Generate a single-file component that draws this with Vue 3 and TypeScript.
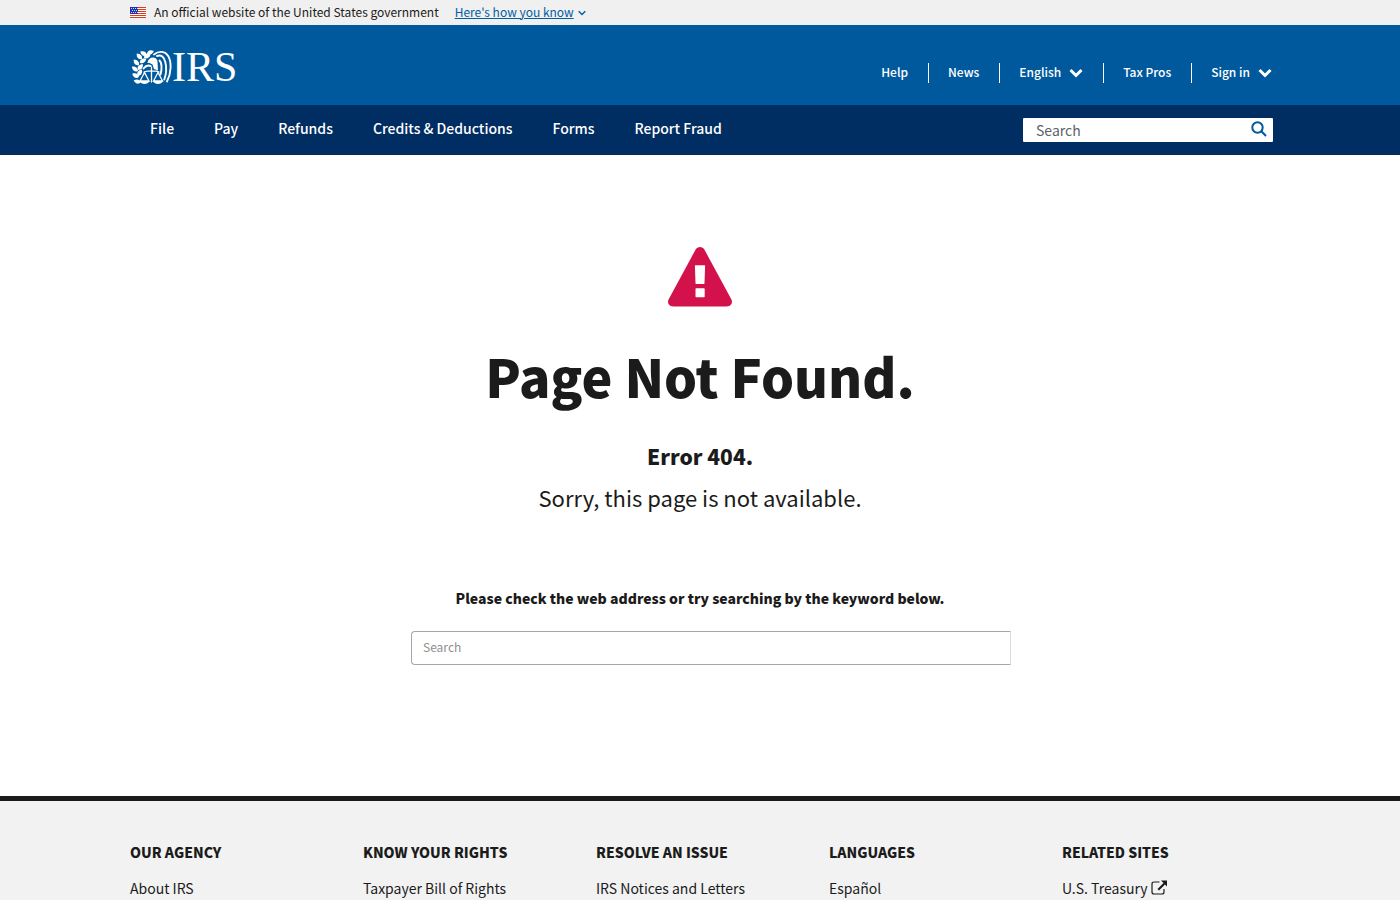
<script setup lang="ts">
interface FooterColumn {
  title: string
  link: string
  external?: boolean
}

interface UtilityItem {
  label: string
  menu?: boolean
}

const utilityItems: UtilityItem[] = [
  { label: 'Help' },
  { label: 'News' },
  { label: 'English', menu: true },
  { label: 'Tax Pros' },
  { label: 'Sign in', menu: true },
]

const mainLinks: string[] = ['File', 'Pay', 'Refunds', 'Credits & Deductions', 'Forms', 'Report Fraud']

const footerColumns: FooterColumn[] = [
  { title: 'Our Agency', link: 'About IRS' },
  { title: 'Know Your Rights', link: 'Taxpayer Bill of Rights' },
  { title: 'Resolve an Issue', link: 'IRS Notices and Letters' },
  { title: 'Languages', link: 'Español' },
  { title: 'Related Sites', link: 'U.S. Treasury', external: true },
]

// Laurel leaves: base point on the branch and the direction of the tip.
const leaves: [number, number, number][] = [
  [9, 32, -165],
  [7, 27, -150],
  [6, 21, -140],
  [7, 15, -130],
  [10, 9, -130],
  [15, 5, -150],
  [6, 26, -55],
  [6, 20, -45],
  [8, 13, -30],
  [12, 8, -25],
  [15, 4, -20],
]
</script>

<template>
  <div class="page">
    <section class="banner" aria-label="Official government website">
      <div class="container banner-inner">
        <svg class="flag" viewBox="0 0 16 11" aria-hidden="true">
          <rect width="16" height="11" fill="#fff" />
          <path d="M0 .5h16M0 2.5h16M0 4.5h16M0 6.5h16M0 8.5h16M0 10.5h16" stroke="#db3e1f" />
          <rect width="8" height="7" fill="#1e33b1" />
          <path d="M1 1.5h7M2 3.5h6M1 5.500h7" stroke="#fff" stroke-dasharray="1 1" opacity=".8" />
        </svg>
        <span>An official website of the United States government</span>
        <button type="button" class="banner-button">
          <span class="banner-link">Here's how you know</span>
          <svg viewBox="0 0 8 6" aria-hidden="true"><path d="M.7 1.200 4 4.500l3.300-3.300" fill="none" stroke="currentColor" stroke-width="1.400" /></svg>
        </button>
      </div>
    </section>

    <header>
      <div class="masthead">
        <div class="container masthead-inner">
          <a href="#" class="logo" aria-label="IRS home">
            <svg viewBox="0 0 104 36" role="img" aria-label="IRS">
              <path v-for="([x, y, angle], i) in leaves" :key="i" d="M0 0C1.500-3.500 5-3.200 7.500-.5 5 2.300 2 2.300 0 0z" :transform="`translate(${x} ${y}) rotate(${angle})`" fill="#fff" />
              <path d="M15.500 13c.5-3.800 3-5.700 6-5.400 2.500.3 4 2 4 4.400l.5 8.500-4-1.500-1.500-4.500c-1.500-1-3-1.800-5-1.500z" fill="#fff" />
              <g fill="none" stroke="#fff" stroke-width="1.900" stroke-linecap="round">
                <path d="M22 4.500c5-4 11-3.500 14.200 1.500 3.500 6 3.300 17-1.200 25.500" />
                <path d="M25 6c4.500-1.500 7 1 8.300 6 1.500 6 1 12-1 17.500" />
                <path d="M27.500 10.500c2.500 2 2.500 9 1 14" />
                <path d="M11.500 18.500c2-2.500 4.500-3.500 7-2.500" />
              </g>
              <g fill="none" stroke="#fff" stroke-width="1.300" stroke-linecap="round">
                <path d="M12 22c4-1.500 12-1.500 15 0M19.500 17v15" />
                <path d="m12.500 22.500-4.500 8.500h9zM26 22.500 21.500 31h9z" />
              </g>
              <path d="M7.500 31h10c-1.500 4-8.500 4-10 0zM21 31h10c-1.500 4-8.500 4-10 0z" fill="#fff" />
              <text x="40" y="31" class="logo-text">IRS</text>
            </svg>
          </a>
          <nav class="utility" aria-label="Utility">
            <template v-for="item in utilityItems" :key="item.label">
              <button v-if="item.menu" type="button" class="utility-item">
                <span>{{ item.label }}</span>
                <svg class="chevron" viewBox="0 0 14 10" aria-hidden="true"><path d="M1.500 2 7 7.500 12.500 2" fill="none" stroke="currentColor" stroke-width="3" /></svg>
              </button>
              <a v-else href="#" class="utility-item"><span>{{ item.label }}</span></a>
            </template>
          </nav>
        </div>
      </div>

      <div class="navbar">
        <div class="container navbar-inner">
          <nav class="main-links" aria-label="Main">
            <a v-for="link in mainLinks" :key="link" href="#">{{ link }}</a>
          </nav>
          <form class="site-search" role="search" @submit.prevent>
            <input type="search" placeholder="Search" aria-label="Search the site" />
            <button type="submit" aria-label="Search">
              <svg viewBox="0 0 16 16" aria-hidden="true"><g fill="none" stroke="currentColor" stroke-width="2"><circle cx="6.500" cy="6.500" r="5.200" /><path d="m10.300 10.300 4.700 4.700" /></g></svg>
            </button>
          </form>
        </div>
      </div>
    </header>

    <main>
      <svg class="warning" viewBox="0 0 64 60" aria-hidden="true">
        <path d="M27.500 2.800c2-3.700 7-3.700 9 0l26.800 49.400c1.900 3.500-.3 7.300-4.500 7.300H5.200c-4.200 0-6.400-3.800-4.500-7.300z" fill="#d3114a" />
        <path d="M27.500 18.300h9q.7 0 .6.800l-.6 17.200q0 .6-.6.600h-7.800q-.6 0-.6-.6l-.6-17.200q0-.8.6-.8zM28.200 41.300h7.800q.7 0 .7.700v7.500q0 .7-.7.700h-7.800q-.7 0-.7-.7V42q0-.7.700-.7z" fill="#fff" />
      </svg>
      <h1>Page Not Found.</h1>
      <h2>Error 404.</h2>
      <p class="sorry">Sorry, this page is not available.</p>
      <form class="keyword" @submit.prevent>
        <label for="keyword">Please check the web address or try searching by the keyword below.</label>
        <input id="keyword" type="search" placeholder="Search" />
      </form>
    </main>

    <footer>
      <div class="container footer-grid">
        <section v-for="column in footerColumns" :key="column.title">
          <h3>{{ column.title }}</h3>
          <a href="#">{{ column.link }}<svg v-if="column.external" viewBox="0 0 16 16" aria-hidden="true">
            <path d="M8.500 2H3Q1 2 1 4v8q0 2 2 2h8q2 0 2-2V9" fill="none" stroke="currentColor" stroke-width="1.200" />
            <path d="M10 .500h6v6l-2-2-6 6L6.500 9l6-6z" fill="currentColor" />
          </svg></a>
        </section>
      </div>
    </footer>
  </div>
</template>

<style>
body {
  margin: 0;
  background: #fff;
}
</style>

<style scoped>
.page {
  display: flex;
  flex-direction: column;
  min-height: 100vh;
  color: #1b1b1b;
  font-family: "Noto Sans CJK SC", "Noto Sans", sans-serif;
  font-size: 14px;
  line-height: 20px;
}

a {
  color: inherit;
  text-decoration: none;
}

button,
input {
  font-family: inherit;
}

button {
  padding: 0;
  border: 0;
  background: none;
  cursor: pointer;
}

h1,
h2,
h3,
p {
  margin: 0;
}

.container {
  width: 100%;
  max-width: 1140px;
  margin: 0 auto;
}

.banner {
  background: #f0f0f0;
  font-size: 12px;
  line-height: 22px;
}

.banner-inner {
  display: flex;
  align-items: center;
  gap: 8px;
  height: 23px;
  padding-bottom: 2px;
}

.flag {
  width: 16px;
  height: 11px;
  margin-top: 2px;
}

.banner-button {
  display: flex;
  align-items: center;
  gap: 4px;
  margin-left: 8px;
  color: #005ea2;
  font-size: 12px;
  line-height: 22px;
}

.banner-link {
  text-decoration: underline;
}

.banner-button svg {
  width: 8px;
  height: 6px;
  margin-top: 2px;
}

.masthead {
  background: #00599c;
  color: #fff;
}

.masthead-inner {
  display: flex;
  justify-content: space-between;
  align-items: center;
  height: 80px;
}

.logo {
  display: flex;
  padding: 6px 0 0 2px;
}

.logo svg {
  width: 104px;
  height: 36px;
  overflow: visible;
}

.logo-text {
  fill: #fff;
  font-family: "Liberation Serif", serif;
  font-size: 42px;
}

.utility {
  display: flex;
  align-items: center;
  margin-right: -2px;
  padding-top: 16px;
}

.utility-item {
  display: flex;
  align-items: center;
  gap: 8px;
  height: 20px;
  padding: 0 20px 0 19px;
  color: #fff;
  font-size: 12px;
  font-weight: 500;
  line-height: 18px;
}

.utility-item span {
  padding-bottom: 2px;
}

.utility-item + .utility-item {
  border-left: 1px solid #fff;
}

.utility-item:last-child {
  padding-right: 0;
}

.chevron {
  width: 14px;
  height: 10px;
}

.navbar {
  background: #002d62;
  color: #fff;
}

.navbar-inner {
  display: flex;
  justify-content: space-between;
  align-items: center;
  height: 50px;
}

.main-links {
  display: flex;
  gap: 40px;
  padding: 0 0 4px 20px;
  font-weight: 500;
}

.site-search {
  display: flex;
  align-items: center;
  width: 250px;
  height: 24px;
  margin-right: -3px;
  border-radius: 1px;
  background: #fff;
}

.site-search input {
  flex: 1;
  min-width: 0;
  padding: 0 0 0 13px;
  border: 0;
  background: none;
  font-size: 14px;
  outline: 0;
}

.site-search input::placeholder {
  color: #5b616b;
}

.site-search button {
  display: flex;
  padding: 0 6px 2px 0;
  color: #00599c;
}

.site-search svg {
  width: 16px;
  height: 16px;
}

main {
  display: flex;
  flex-direction: column;
  align-items: center;
  padding: 92px 20px 131px;
}

.warning {
  width: 64px;
  height: 60px;
}

h1 {
  margin-top: 37px;
  font-size: 52px;
  font-weight: 900;
  line-height: 64px;
}

h2 {
  margin-top: 33px;
  font-size: 21px;
  font-weight: 900;
  line-height: 30px;
}

.sorry {
  margin-top: 10px;
  font-size: 22px;
  line-height: 32px;
}

.keyword {
  display: flex;
  flex-direction: column;
  align-items: center;
  width: 100%;
  margin-top: 75px;
}

.keyword label {
  font-weight: 900;
}

.keyword input {
  box-sizing: border-box;
  width: 100%;
  max-width: 600px;
  height: 34px;
  margin: 23px 0 0 22px;
  padding: 0 12px 3px 11px;
  border: 1px solid #a6a6a6;
  border-right-color: #dcdcdc;
  border-radius: 4px 0 0 4px;
  font-size: 12px;
}

.keyword input::placeholder {
  color: #8f8f8f;
}

footer {
  flex: 1;
  border-top: 5px solid #1b1b1b;
  background: #f2f2f2;
}

.footer-grid {
  display: grid;
  grid-template-columns: repeat(5, 1fr);
  column-gap: 25px;
  padding-top: 41px;
}

h3 {
  margin-bottom: 16px;
  font-size: 14px;
  font-weight: 900;
  line-height: 20px;
  text-transform: uppercase;
}

.footer-grid a {
  display: flex;
  align-items: center;
  gap: 3px;
  white-space: nowrap;
}

.footer-grid svg {
  width: 16px;
  height: 16px;
}
</style>
